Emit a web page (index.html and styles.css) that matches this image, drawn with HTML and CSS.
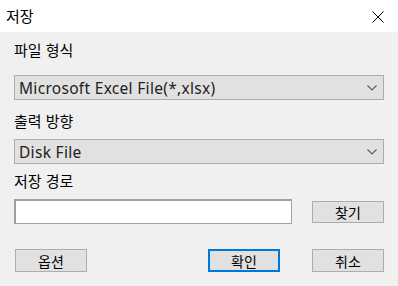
FILE: index.html
```html
<!DOCTYPE html>
<html lang="ko">
<head>
    <meta charset="UTF-8">
    <title>저장</title>
    <link rel="stylesheet" href="styles.css">
</head>
<body>
    <div class="window">
        <div class="titlebar">
            <span class="title">저장</span>
            <svg class="close" width="12" height="12" viewBox="0 0 12 12">
                <path d="M0.5 0.5 L11.5 11.5 M11.5 0.5 L0.5 11.5" stroke="#000" stroke-width="1" fill="none"/>
            </svg>
        </div>
        <div class="content">
            <div class="label first">파일 형식</div>
            <div class="combo combo-format">
                <span>Microsoft Excel File(*,xlsx)</span>
                <svg class="chevron" width="10" height="6" viewBox="0 0 10 6">
                    <path d="M0.5 0.5 L5 5 L9.5 0.5" stroke="#606060" stroke-width="1.2" fill="none"/>
                </svg>
            </div>
            <div class="label second">출력 방향</div>
            <div class="combo combo-output">
                <span>Disk File</span>
                <svg class="chevron" width="10" height="6" viewBox="0 0 10 6">
                    <path d="M0.5 0.5 L5 5 L9.5 0.5" stroke="#606060" stroke-width="1.2" fill="none"/>
                </svg>
            </div>
            <div class="label third">저장 경로</div>
            <div class="path-row">
                <div class="path-input"></div>
                <button class="btn btn-browse">찾기</button>
            </div>
            <div class="actions">
                <button class="btn btn-options">옵션</button>
                <div class="spacer"></div>
                <button class="btn btn-default">확인</button>
                <button class="btn btn-cancel">취소</button>
            </div>
        </div>
    </div>
</body>
</html>
```

FILE: styles.css
```css
body {
    margin: 0;
    font-family: "Noto Sans CJK KR", "Noto Sans", sans-serif;
    color: #000;
    background-color: #f0f0f0;
}

.window {
    width: 398px;
    height: 286px;
    background-color: #f0f0f0;
    overflow: hidden;
}

.titlebar {
    height: 32px;
    background-color: #fff;
    display: flex;
    align-items: center;
    justify-content: space-between;
    padding: 0 14px 0 6px;
}

.title {
    font-size: 15px;
    line-height: 20px;
}

.close {
    display: block;
    margin-top: 1px;
}

.content {
    padding: 0 14px;
    display: flex;
    flex-direction: column;
}

.label {
    font-size: 15px;
    line-height: 20px;
    height: 20px;
}

.label.first {
    margin-top: 8px;
}

.label.second {
    margin-top: 11px;
}

.label.third {
    margin-top: 7px;
}

.combo {
    height: 25px;
    box-sizing: border-box;
    background-color: #e1e1e1;
    border: 1px solid #adadad;
    display: flex;
    align-items: center;
    justify-content: space-between;
    padding: 0 6px 0 4px;
    font-family: "Noto Sans", "Noto Sans CJK KR", sans-serif;
    font-size: 15.5px;
    letter-spacing: 0.3px;
    color: #222;
}

.combo-format {
    margin-top: 15px;
}

.combo-output {
    margin-top: 8px;
}

.path-row {
    margin-top: 8px;
    display: flex;
    align-items: center;
    justify-content: space-between;
}

.path-input {
    width: 278px;
    height: 25px;
    box-sizing: border-box;
    background-color: #fff;
    border: 2px solid #a0a0a0;
    border-right-width: 1px;
    border-bottom-width: 1px;
}

.btn {
    width: 72px;
    height: 23px;
    box-sizing: border-box;
    background-color: #e1e1e1;
    border: 1px solid #adadad;
    font-family: "Noto Sans CJK KR", sans-serif;
    font-size: 14px;
    line-height: 20px;
    padding: 0;
    color: #000;
}

.btn-browse {
    height: 22px;
}

.actions {
    margin-top: 25px;
    display: flex;
    align-items: center;
}

.btn-options {
    margin-left: 1px;
}

.spacer {
    flex: 1;
}

.btn-default {
    border: 2px solid #0078d7;
    margin-right: 32px;
}
```
